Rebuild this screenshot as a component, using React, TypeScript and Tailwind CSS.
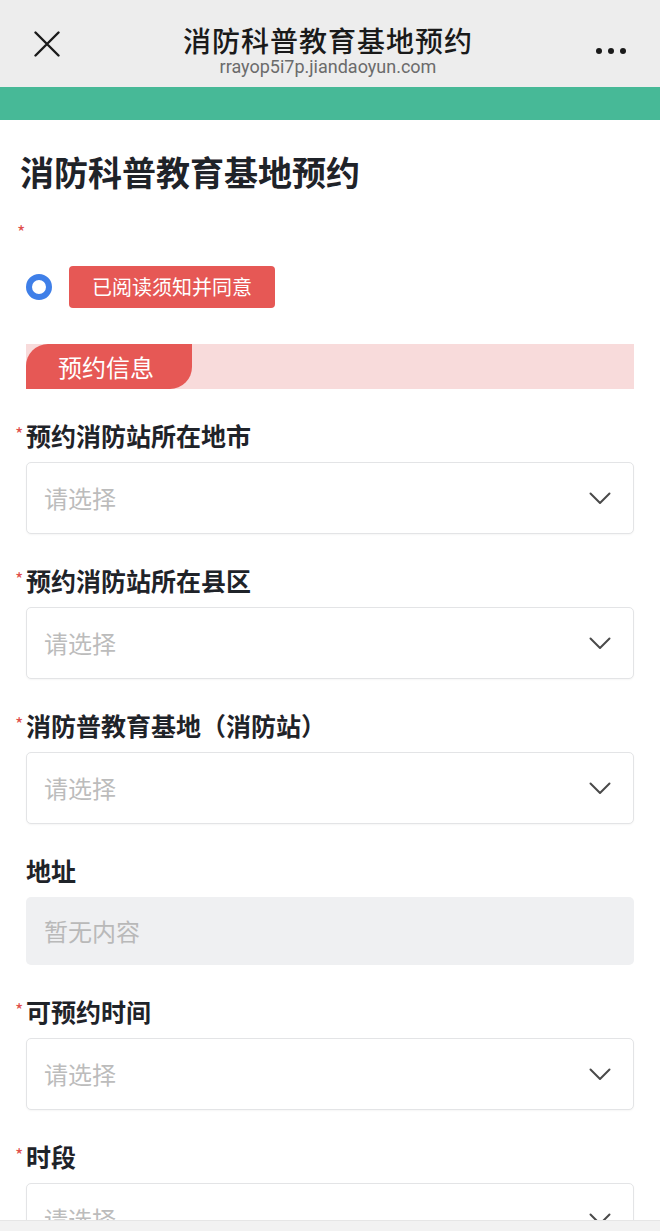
const font = { fontFamily: '"Noto Sans CJK SC", "Noto Sans", sans-serif' };

function Chevron() {
  return (
    <svg width="22" height="13" viewBox="0 0 22 13" fill="none" className="shrink-0">
      <path d="M1.5 1.5 L11 11 L20.5 1.5" stroke="#4a4a4a" strokeWidth="2" strokeLinecap="round" strokeLinejoin="round" />
    </svg>
  );
}

function Label({ text, required = true }: { text: string; required?: boolean }) {
  return (
    <div className="relative h-[30px] flex items-center text-[25px] leading-[30px] font-bold text-[#1f2329]">
      {required && <span className="absolute left-[-11px] top-[-2px] text-[18px] font-normal text-[#e0504d]">*</span>}
      {text}
    </div>
  );
}

function SelectField({ label }: { label: string }) {
  return (
    <div className="pt-[31px]">
      <Label text={label} />
      <div className="mt-[12px] h-[72px] rounded-[5px] border border-[#e3e4e6] bg-white flex items-center justify-between pl-[17px] pr-[22px] shadow-[0_1px_2px_rgba(0,0,0,0.04)]">
        <span className="text-[24px] text-[#bcbcbc]">请选择</span>
        <Chevron />
      </div>
    </div>
  );
}

export default function App() {
  return (
    <div className="w-[660px] h-[1231px] overflow-hidden bg-white flex flex-col relative" style={font}>
      {/* top bar */}
      <div className="h-[87px] bg-[#ededed] flex items-center px-[34px] shrink-0">
        <svg width="26" height="26" viewBox="0 0 26 26" fill="none" className="shrink-0">
          <path d="M1.5 1.5 L24.5 24.5 M24.5 1.5 L1.5 24.5" stroke="#1a1a1a" strokeWidth="2.4" strokeLinecap="round" />
        </svg>
        <div className="flex-1 flex flex-col items-center pt-[12px]">
          <div className="text-[28px] leading-[34px] font-medium text-[#1a1a1a] tracking-[1px]">消防科普教育基地预约</div>
          <div className="text-[18px] leading-[20px] text-[#6b6b6b]" style={{ fontFamily: 'Roboto, "Liberation Sans", sans-serif' }}>rrayop5i7p.jiandaoyun.com</div>
        </div>
        <div className="flex items-center gap-[6px] pt-[14px]">
          <span className="w-[6px] h-[6px] rounded-full bg-[#1a1a1a]" />
          <span className="w-[6px] h-[6px] rounded-full bg-[#1a1a1a]" />
          <span className="w-[6px] h-[6px] rounded-full bg-[#1a1a1a]" />
        </div>
      </div>
      <div className="h-[33px] bg-[#47b997] shrink-0" />

      <div className="px-[26px] pt-[30px]">
        <h1 className="ml-[-6px] text-[34px] leading-[44px] font-bold text-[#1f2329]">消防科普教育基地预约</h1>

        <div className="mt-[27px] ml-[-9px] text-[18px] leading-[20px] text-[#e0504d]">*</div>

        <div className="mt-[25px] flex items-center gap-[17px]">
          <span className="w-[26px] h-[26px] rounded-full border-[6px] border-[#3f7fe8] bg-white" />
          <div className="h-[42px] w-[206px] rounded-[4px] bg-[#e65855] flex items-center justify-center text-[20px] text-white">已阅读须知并同意</div>
        </div>

        {/* section header */}
        <div className="mt-[36px] h-[45px] bg-[#f8dbdb] flex">
          <div className="w-[166px] h-full bg-[#e65855] rounded-tl-[22px] rounded-br-[22px] flex items-center pl-[32px] text-[24px] text-white">预约信息</div>
        </div>

        <SelectField label="预约消防站所在地市" />
        <SelectField label="预约消防站所在县区" />
        <SelectField label="消防普教育基地（消防站）" />

        <div className="pt-[31px]">
          <Label text="地址" required={false} />
          <div className="mt-[12px] h-[68px] rounded-[5px] bg-[#eff0f2] flex items-center pl-[18px]">
            <span className="text-[24px] text-[#b9b9b9]">暂无内容</span>
          </div>
        </div>

        <SelectField label="可预约时间" />
        <SelectField label="时段" />
      </div>

      {/* bottom strip */}
      <div className="absolute left-0 right-0 bottom-0 h-[11px] bg-[#f2f2f2] border-t border-[#e6e6e6]" />
    </div>
  );
}
